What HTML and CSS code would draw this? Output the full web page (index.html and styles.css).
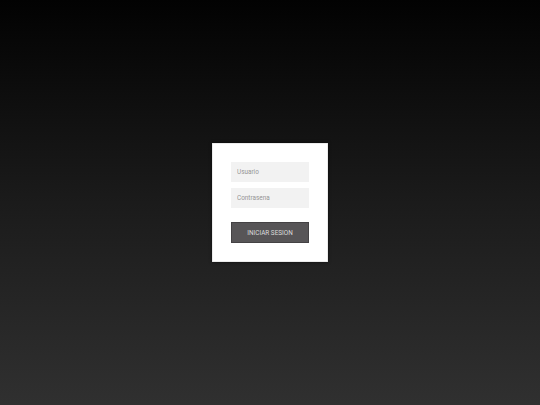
FILE: index.html
```html
<!DOCTYPE html>
<html lang="es">
<head>
<meta charset="utf-8">
<title>Login</title>
<link rel="stylesheet" href="styles.css">
</head>
<body>
<main class="page">
  <form class="card">
    <input class="field" type="text" placeholder="Usuario">
    <input class="field" type="password" placeholder="Contrasena">
    <button class="btn" type="button">INICIAR SESION</button>
  </form>
</main>
</body>
</html>
```
FILE: styles.css
```css
html, body {
  margin: 0;
  padding: 0;
  height: 100%;
}
body {
  background: linear-gradient(to bottom, #020202 0%, #1b1b1b 50%, #303030 100%);
  font-family: Roboto, "Liberation Sans", Arial, sans-serif;
}
.page {
  height: 405px;
  display: flex;
  align-items: center;
  justify-content: center;
}
.card {
  box-sizing: border-box;
  width: 116px;
  padding: 19px;
  background: #ffffff;
  box-shadow: 0 0 3px rgba(0, 0, 0, 0.6), inset 0 0 0 0.5px #d8d8d8;
  display: flex;
  flex-direction: column;
  margin: 0;
}
.field {
  box-sizing: border-box;
  height: 20px;
  width: 78px;
  margin: 0 0 6px 0;
  padding: 0 6px;
  border: none;
  outline: none;
  background: #f2f2f2;
  font-family: Roboto, "Liberation Sans", Arial, sans-serif;
  font-size: 6.4px;
  font-weight: 400;
  color: #666;
}
.field::placeholder {
  color: #959595;
}
.btn {
  box-sizing: border-box;
  margin-top: 8px;
  height: 21px;
  width: 78px;
  padding: 0;
  background: #575557;
  border: 1px solid #444244;
  color: #dcdcdc;
  font-family: Roboto, "Liberation Sans", Arial, sans-serif;
  font-size: 6.4px;
  font-weight: 400;
  cursor: pointer;
}
```
